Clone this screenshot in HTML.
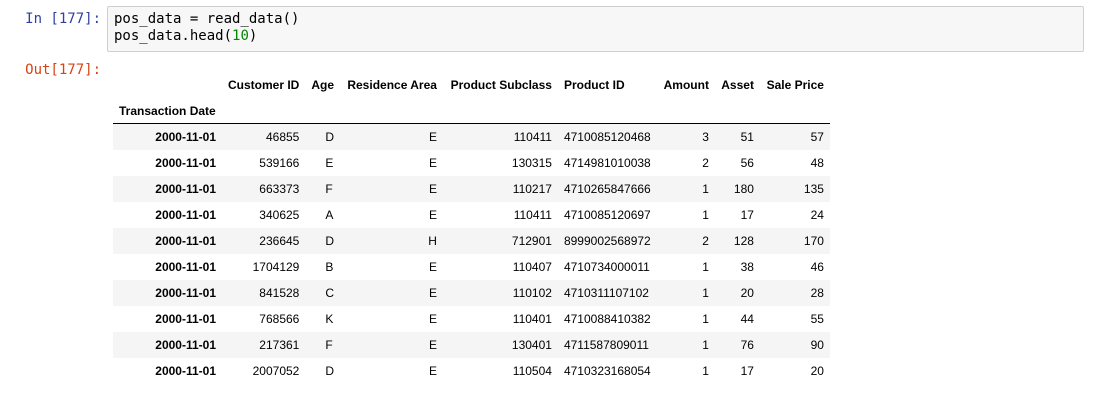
<!DOCTYPE html>
<html><head><style>
body{margin:0;background:#fff;width:1095px;height:420px;overflow:hidden;position:relative;font-family:"Liberation Sans",sans-serif;}
.mono{font-family:"DejaVu Sans Mono","Liberation Mono",monospace;font-size:14px;}
.pin{position:absolute;right:994px;top:11px;color:#303f9f;}
.pout{position:absolute;right:994px;top:62px;color:#d84315;}
.box{position:absolute;left:107px;top:6px;width:977px;height:46px;background:#f7f7f7;border:1px solid #cfcfcf;border-radius:2px;box-sizing:border-box;}
.code{position:absolute;left:6px;top:4px;line-height:17px;color:#000;}
table{position:absolute;left:113px;top:72px;border-collapse:collapse;font-size:12px;color:#000;}
td,th{padding:0 6px;height:26px;text-align:right;white-space:nowrap;}
th{font-weight:bold;}
thead tr:last-child th{border-bottom:1px solid #000;height:25px;}
tbody tr:nth-child(odd){background:#f5f5f5;}
.l{text-align:left;}
.age{text-align:left;padding-left:20px;}
</style></head><body>
<div class="mono pin">In [177]:</div>
<div class="box"><div class="mono code">pos_data = read_data()<br>pos_data.head(<span style="color:#080">10</span>)</div></div>
<div class="mono pout">Out[177]:</div>
<table>
<colgroup><col style="width:109px"><col style="width:83px"><col style="width:36px"><col style="width:101px"><col style="width:115px"><col style="width:99px"><col style="width:58px"><col style="width:45px"><col style="width:70px"></colgroup>
<thead>
<tr><th></th><th>Customer ID</th><th class="l">Age</th><th>Residence Area</th><th>Product Subclass</th><th class="l">Product ID</th><th>Amount</th><th>Asset</th><th>Sale Price</th></tr>
<tr><th class="l" style="padding-left:6px">Transaction Date</th><th></th><th></th><th></th><th></th><th></th><th></th><th></th><th></th></tr>
</thead>
<tbody>
<tr><th>2000-11-01</th><td>46855</td><td class="age">D</td><td>E</td><td>110411</td><td class="l">4710085120468</td><td>3</td><td>51</td><td>57</td></tr>
<tr><th>2000-11-01</th><td>539166</td><td class="age">E</td><td>E</td><td>130315</td><td class="l">4714981010038</td><td>2</td><td>56</td><td>48</td></tr>
<tr><th>2000-11-01</th><td>663373</td><td class="age">F</td><td>E</td><td>110217</td><td class="l">4710265847666</td><td>1</td><td>180</td><td>135</td></tr>
<tr><th>2000-11-01</th><td>340625</td><td class="age">A</td><td>E</td><td>110411</td><td class="l">4710085120697</td><td>1</td><td>17</td><td>24</td></tr>
<tr><th>2000-11-01</th><td>236645</td><td class="age">D</td><td>H</td><td>712901</td><td class="l">8999002568972</td><td>2</td><td>128</td><td>170</td></tr>
<tr><th>2000-11-01</th><td>1704129</td><td class="age">B</td><td>E</td><td>110407</td><td class="l">4710734000011</td><td>1</td><td>38</td><td>46</td></tr>
<tr><th>2000-11-01</th><td>841528</td><td class="age">C</td><td>E</td><td>110102</td><td class="l">4710311107102</td><td>1</td><td>20</td><td>28</td></tr>
<tr><th>2000-11-01</th><td>768566</td><td class="age">K</td><td>E</td><td>110401</td><td class="l">4710088410382</td><td>1</td><td>44</td><td>55</td></tr>
<tr><th>2000-11-01</th><td>217361</td><td class="age">F</td><td>E</td><td>130401</td><td class="l">4711587809011</td><td>1</td><td>76</td><td>90</td></tr>
<tr><th>2000-11-01</th><td>2007052</td><td class="age">D</td><td>E</td><td>110504</td><td class="l">4710323168054</td><td>1</td><td>17</td><td>20</td></tr>
</tbody>
</table>
</body></html>
